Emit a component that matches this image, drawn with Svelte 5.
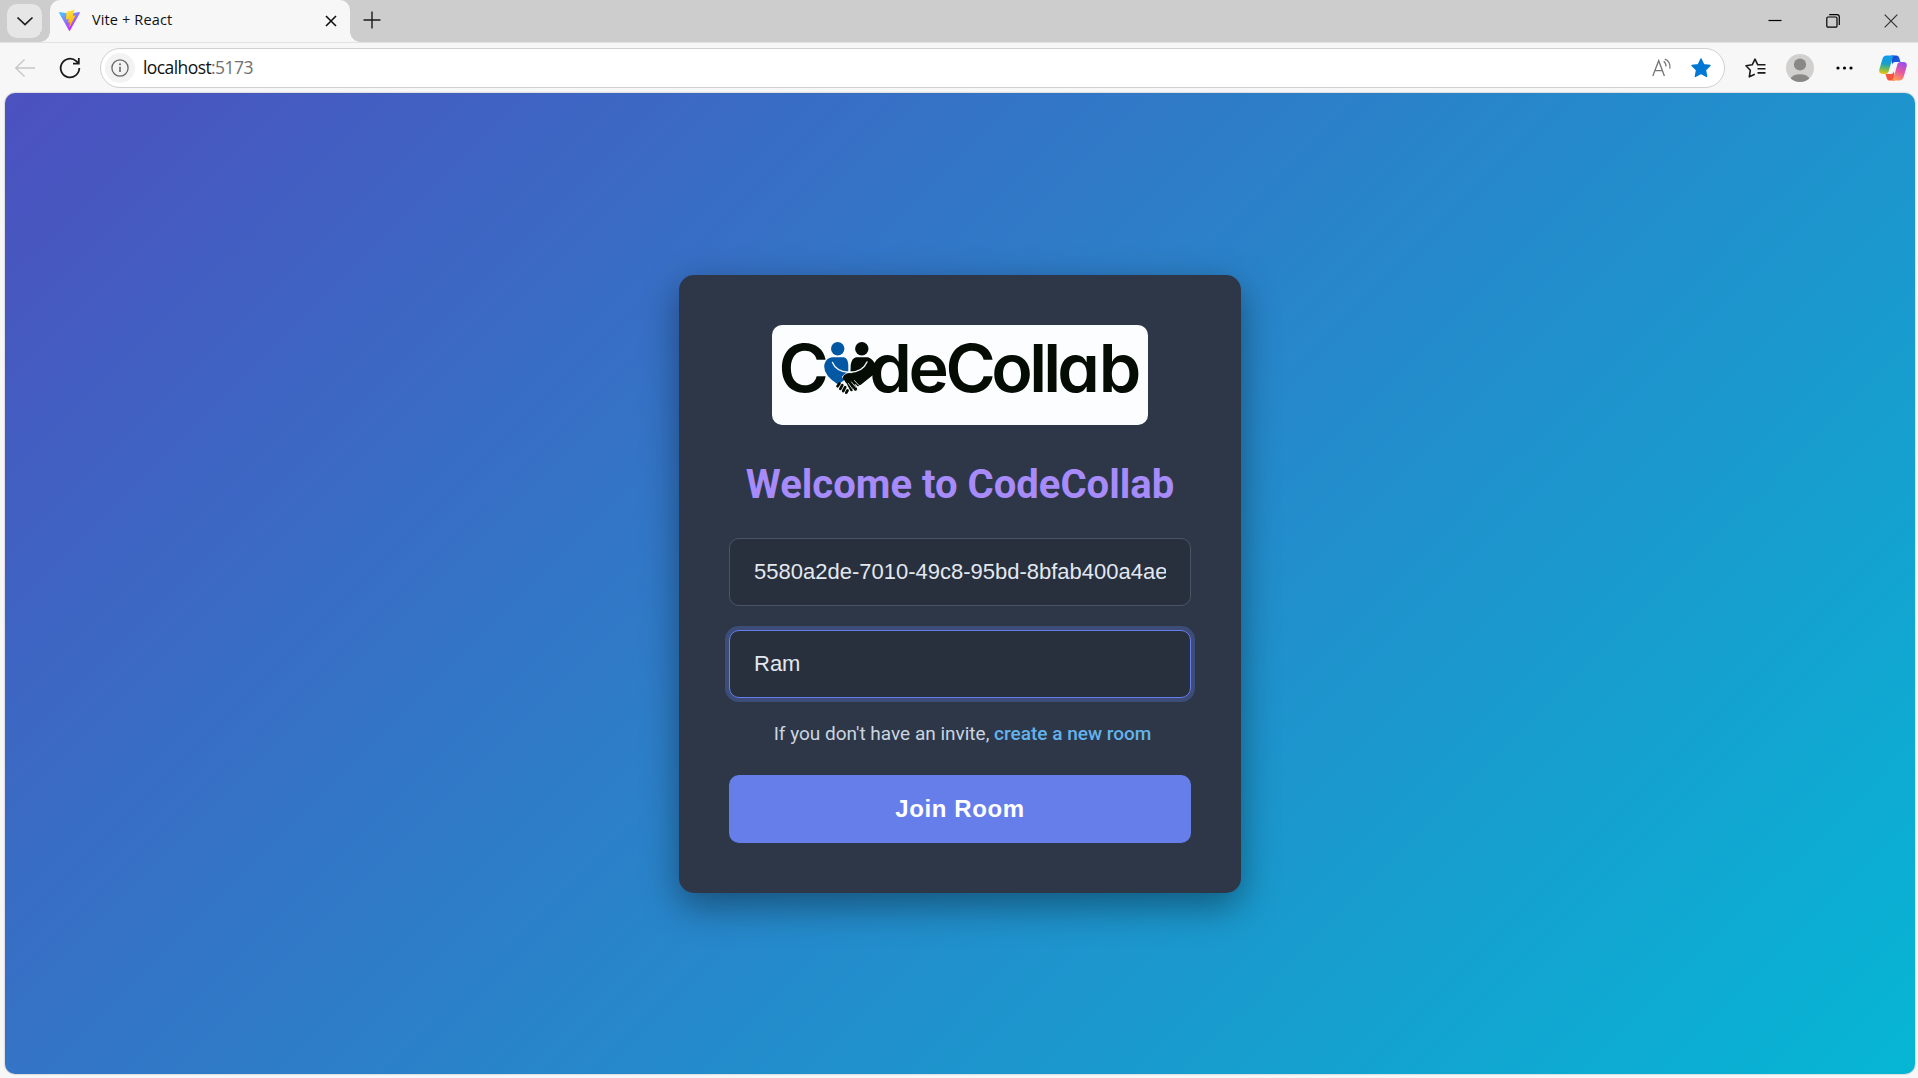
<script>
  let roomId = $state('5580a2de-7010-49c8-95bd-8bfab400a4ae');
  let username = $state('Ram');
</script>

<div class="window">
  <header class="tabstrip">
    <button class="tab-menu" aria-label="Tab actions">
      <svg width="18" height="18" viewBox="0 0 18 18"><path d="M1.500 5.500 9 12.500 16.500 5.500" fill="none" stroke="#1b1b1b" stroke-width="1.7" /></svg>
    </button>
    <div class="tab">
      <svg class="vite" width="21" height="21" viewBox="0 0 32 32">
        <defs>
          <linearGradient id="vt" x1="0" y1="0" x2="0.6" y2="0.85">
            <stop offset="0" stop-color="#41d1ff" /><stop offset="1" stop-color="#bd34fe" />
          </linearGradient>
          <linearGradient id="bolt" x1="0.4" y1="0" x2="0.6" y2="1">
            <stop offset="0" stop-color="#ffea83" /><stop offset="0.1" stop-color="#ffdd35" /><stop offset="1" stop-color="#ffa800" />
          </linearGradient>
        </defs>
        <path d="M31.8 4.7 16.9 31.4a1 1 0 0 1-1.7 0L.1 4.7a1 1 0 0 1 1-1.5L16 5.900 30.800 3.200a1 1 0 0 1 1 1.500z" fill="url(#vt)" />
        <path d="M22.600.1 11.700 2.200a.4.4 0 0 0-.3.4l-.7 11.400a.4.4 0 0 0 .5.4l3-.7a.4.4 0 0 1 .5.500l-.9 4.400a.4.4 0 0 0 .5.500l1.900-.6a.4.4 0 0 1 .5.500l-1.400 7c-.1.400.500.700.700.300L25.200 8.900a.4.4 0 0 0-.4-.6l-3.100.6a.4.4 0 0 1-.5-.5l2-7.400a.4.4 0 0 0-.6-.9z" fill="url(#bolt)" />
      </svg>
      <span class="tab-title">Vite + React</span>
      <svg class="tab-close" width="12" height="12" viewBox="0 0 12 12"><path d="M1 1 11 11M11 1 1 11" stroke="#111" stroke-width="1.6" /></svg>
    </div>
    <svg class="new-tab" width="18" height="18" viewBox="0 0 18 18"><path d="M9 0.500V17.500M0.500 9H17.500" stroke="#1b1b1b" stroke-width="1.4" /></svg>
    <div class="controls">
      <svg width="14" height="14" viewBox="0 0 14 14"><path d="M0.500 6.500H13.500" stroke="#000" stroke-width="1.2" /></svg>
      <svg width="14" height="14" viewBox="0 0 14 14" fill="none" stroke="#000" stroke-width="1.200"><rect x="0.800" y="3" width="10.200" height="10.200" rx="1.300" /><path d="M3.200 .7H11a2.300 2.300 0 0 1 2.300 2.300V11" /></svg>
      <svg width="14" height="14" viewBox="0 0 14 14"><path d="M.7 .7 13.300 13.300M13.300 .7 .7 13.300" stroke="#333" stroke-width="1.200" /></svg>
    </div>
  </header>

  <nav class="toolbar">
    <svg class="back" width="22" height="20" viewBox="0 0 22 20"><path d="M21 10H2M10.500 1.500 1.800 10 10.500 18.500" fill="none" stroke="#c8c8c8" stroke-width="1.500" /></svg>
    <svg class="reload" width="22" height="22" viewBox="0 0 22 22" fill="none" stroke="#1b1b1b" stroke-width="1.800"><path d="M20.300 11a9.300 9.300 0 1 1-3-6.800l2.100 2M19.800 1.100V6.700H14" /></svg>
    <div class="address">
      <span class="info">
        <svg width="18" height="18" viewBox="0 0 18 18"><circle cx="9" cy="9" r="8.100" fill="none" stroke="#666" stroke-width="1.300" /><path d="M9 7.800V13" stroke="#666" stroke-width="1.600" /><circle cx="9" cy="5.300" r="1" fill="#666" /></svg>
      </span>
      <span class="url">localhost<span class="port">:5173</span></span>
      <svg class="read" width="20" height="19" viewBox="0 0 20 19" fill="none" stroke="#767676" stroke-width="1.300"><path d="M.8 18 6.700 2.700 12.400 18M2.800 12.700H10.500M11.700 3.200a6 6 0 0 1 2.200 5.300M12.800 1.100c3.400 1.300 5.700 4.800 5 9.600" /></svg>
      <svg class="fav" width="20" height="20" viewBox="0 0 20 20"><path d="M10 1 12.700 6.700 19 7.500 14.400 11.900 15.600 18.500 10 15.400 4.400 18.500 5.600 11.900 1 7.500 7.300 6.700Z" fill="#0078d4" stroke="#0078d4" stroke-width="1.400" stroke-linejoin="round" /></svg>
    </div>
    <svg class="collections" width="21" height="20" viewBox="0 0 21 20" fill="none" stroke="#1b1b1b" stroke-width="1.600" stroke-linejoin="round"><path d="M9.800 16.200 4.300 18.800 5.300 12.300 1 7.800 7.200 6.800 10 1.200 12.800 6.800H20.500M12.500 10.800H20.500M12.500 14.900H20.500" /></svg>
    <svg class="avatar" width="28" height="28" viewBox="0 0 28 28">
      <defs><clipPath id="disc"><circle cx="14" cy="14" r="14" /></clipPath></defs>
      <circle cx="14" cy="14" r="14" fill="#d2d0ce" />
      <g fill="#8a8886" clip-path="url(#disc)"><circle cx="14" cy="10.500" r="6.100" /><path d="M4 25.500a10.600 8 0 0 1 20 0L19 28H9Z" /></g>
    </svg>
    <svg class="more" width="17" height="4" viewBox="0 0 17 4"><circle cx="2" cy="2" r="1.600" /><circle cx="8.500" cy="2" r="1.600" /><circle cx="15" cy="2" r="1.600" /></svg>
    <svg class="copilot" width="28" height="26" viewBox="0 0 28 26">
      <defs>
        <linearGradient id="cpl" x1="0.4" y1="0" x2="0.3" y2="1"><stop offset="0" stop-color="#0f9bee" /><stop offset="0.45" stop-color="#1aa0c8" /><stop offset="0.72" stop-color="#6dbb5c" /><stop offset="1" stop-color="#f2c40c" /></linearGradient>
        <linearGradient id="cpr" x1="0.7" y1="0" x2="0.3" y2="1"><stop offset="0" stop-color="#9a4df0" /><stop offset="0.5" stop-color="#e8589f" /><stop offset="1" stop-color="#ffa04f" /></linearGradient>
        <linearGradient id="cpt" x1="0" y1="0" x2="1" y2="1"><stop offset="0" stop-color="#1b3fd0" /><stop offset="1" stop-color="#1e6fe0" /></linearGradient>
      </defs>
      <path d="M12 .5h5.200c1.800 0 2.600 1 3.100 2.600l1.200 4h-5.200c-2 0-2.700 1-3.200 2.600Z" fill="url(#cpt)" />
      <path d="M16 25.500h-5.200c-1.800 0-2.600-1-3.100-2.600l-1.200-4h5.200c2 0 2.700-1 3.200-2.600Z" fill="#f4553f" />
      <path d="M7.700 .5h8.500c-1.600.2-2.300 1.300-2.800 3L9.800 16c-.6 2-1.600 2.900-3.600 2.900H3.500c-2.800 0-3.800-2-3.100-4.600L3.400 4C4.100 1.700 5.300.5 7.700.5Z" fill="url(#cpl)" />
      <path d="M20.300 25.500h-8.500c1.600-.2 2.300-1.300 2.800-3L18.200 10c.6-2 1.600-2.900 3.600-2.900h2.700c2.800 0 3.800 2 3.100 4.600L24.600 22c-.7 2.300-1.900 3.500-4.300 3.500Z" fill="url(#cpr)" />
    </svg>
  </nav>

  <main class="page">
    <section class="card">
      <svg class="logo" width="376" height="100" viewBox="0 0 376 100" role="img" aria-label="CodeCollab">
        <rect width="376" height="100" rx="10" fill="#fcfdff" />
        <g class="word" transform="scale(1.05 1.02)">
          <text x="6.100" y="65.900">C</text>
          <text x="92.600 130 165.200 208.900 245 258.300 271.700 311.100" y="65.900">deCollab</text>
        </g>
        <g>
          <circle cx="65.700" cy="23.800" r="6.700" fill="#0358a4" />
          <circle cx="89.800" cy="23.800" r="6.700" fill="#040c04" />
          <path d="M60 32.200H72Q76.300 33.500 76.300 41V46L70 51.500 72.500 55 66 59.500Q52 50.500 52.200 41.500C52.500 36 55.500 33 60 32.200Z" fill="#0358a4" />
          <path d="M84 32.200H96Q101.500 34.500 103.500 40L101 50 88.500 60 74 58 70.500 52.500 78.500 47 78.700 40Q79.500 33.500 84 32.200Z" fill="#040c04" />
          <path d="M60.500 37.500Q64 46.500 76.500 47.200Q90.500 47.500 95 37M71 52.500Q76 48 80.500 47.200" fill="none" stroke="#eef3fa" stroke-width="1.400" stroke-linecap="round" />
          <path d="M73 51.500Q76 49 79 50M72.500 53 77 53.500 81.500 52 86 59.500M77.500 54.500 83.500 64M75.500 56.500 79.500 64.500" fill="none" stroke="#040c04" stroke-width="3.300" stroke-linecap="round" stroke-linejoin="round" />
          <path d="M79.500 57 84 62.500M82.500 55.500 87 60.500M76.500 58.500 81 65" fill="none" stroke="#f4f7fb" stroke-width=".8" stroke-linecap="round" />
          <g stroke="#040c04" stroke-width="2.700" stroke-linecap="round"><path d="M67.500 58.500 65.500 61.200M70.300 60.200 68.300 63.800M73.200 62.200 71.200 66M75.500 65.500 74.300 67.700" /></g>
        </g>
      </svg>

      <h1>Welcome to CodeCollab</h1>
      <input class="field" type="text" aria-label="Room ID" bind:value={roomId} />
      <input class="field active" type="text" aria-label="Username" bind:value={username} />
      <p class="hint">If you don't have an invite,&nbsp;<a href="#new">create a new room</a></p>
      <button class="join">Join Room</button>
    </section>
  </main>
</div>

<style>
  :global(body) { margin: 0; overflow: hidden; }
  * { box-sizing: border-box; }
  svg { display: block; flex: none; }
  button { border: 0; padding: 0; }

  .window {
    width: 100vw; height: 100vh;
    display: flex; flex-direction: column;
    background: #f7f7f7;
    font-family: "Open Sans", "Noto Sans", sans-serif;
  }

  .tabstrip { height: 42px; flex: none; display: flex; align-items: flex-start; background: #cdcdcd; }
  .tab-menu {
    width: 35px; height: 34px; margin: 4px 7px 0 7px; border-radius: 10px;
    display: flex; align-items: center; justify-content: center; background: #e6e6e6;
  }
  .tab {
    position: relative;
    width: 300px; height: 42px; margin-left: 1px; padding: 0 13px 2px 9px;
    display: flex; align-items: center;
    background: #f7f7f7; border-radius: 10px 10px 0 0;
  }
  .tab::before, .tab::after {
    content: ""; position: absolute; bottom: 0; width: 10px; height: 10px;
  }
  .tab::before { left: -10px; background: radial-gradient(circle at 0 0, #cdcdcd 9.500px, #f7f7f7 10px); }
  .tab::after { right: -10px; background: radial-gradient(circle at 100% 0, #cdcdcd 9.500px, #f7f7f7 10px); }
  .tab-title { margin-left: 12px; font-size: 14.500px; letter-spacing: 0.130px; color: #111; white-space: nowrap; margin-top: -2px; }
  .tab-close { margin-left: auto; margin-top: 2px; }
  .new-tab { margin: 11px 0 0 13px; }
  .controls { margin: 14px 20px 0 auto; display: flex; gap: 44px; }

  .toolbar { height: 51px; flex: none; display: flex; align-items: center; padding: 0 11px 1px 14px; border-top: 1px solid #e3e3e3; }
  .reload { margin-left: 23px; }
  .address {
    width: 1625px; height: 40px; margin-left: 19px; padding: 0 13px 0 4px;
    display: flex; align-items: center;
    background: #fff; border: 1px solid #d0d0d0; border-radius: 20px;
  }
  .info { width: 30px; height: 30px; border-radius: 50%; background: #f3f3f3; display: flex; align-items: center; justify-content: center; }
  .url { margin: -1px 0 0 8px; font-size: 17.500px; letter-spacing: -0.580px; color: #111; white-space: nowrap; }
  .port { color: #707070; }
  .read { margin: -1px 0 0 auto; }
  .fav { margin-left: 19px; }
  .collections { margin-left: 20px; }
  .avatar { margin-left: 20px; }
  .more { margin-left: 22px; }
  .copilot { margin-left: auto; }

  .page {
    flex: 1; margin: 0 3px 4px 5px; border-radius: 10px;
    display: flex; align-items: center; justify-content: center;
    background: linear-gradient(135deg, #4c51bf, #06b6d4);
    box-shadow: 0 0 2px rgba(0, 0, 0, 0.35);
  }
  .card {
    width: 562px; padding: 50px; border-radius: 15px;
    display: flex; flex-direction: column; align-items: center;
    background: #2d3748;
    box-shadow: 0 12.500px 37.500px rgba(0, 0, 0, 0.4);
  }
  .word {
    font-family: Inter, sans-serif; font-weight: 600; font-size: 65px; font-feature-settings: "cv11";
    fill: #040c04;
  }

  h1 { margin: 36px 0 30px; font: 700 40px/47px Roboto, sans-serif; color: #a78bfa; white-space: nowrap; }
  .field {
    width: 100%; height: 68px; padding: 0 24px; margin: 0 0 24px;
    border: 1px solid #4a5568; border-radius: 10px; outline: none;
    background: #282f3d; color: #e2e8f0;
    font: 22px "Liberation Sans", Arial, sans-serif;
  }
  .active { border-color: #667eea; box-shadow: 0 0 0 4px rgba(102, 126, 234, 0.3); }
  .hint { margin: 1px 0 30px; padding-left: 5px; font: 19px/22px Roboto, sans-serif; color: #cbd5e0; white-space: nowrap; }
  .hint a { color: #63b3ed; font-weight: 500; text-decoration: none; }
  .join {
    width: 100%; height: 68px; border-radius: 10px;
    background: #667eea; color: #fff;
    font: 700 24px "Liberation Sans", Arial, sans-serif; letter-spacing: 0.625px;
  }
</style>
